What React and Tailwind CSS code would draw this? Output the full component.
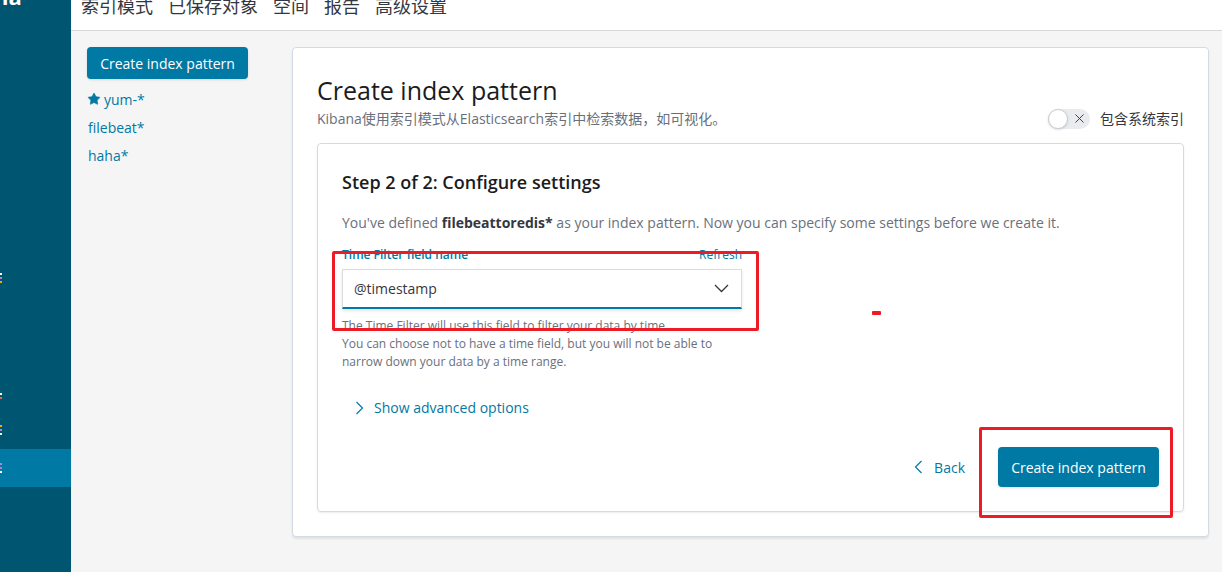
import { Star, X } from "lucide-react";

const tabs = ["索引模式", "已保存对象", "空间", "报告", "高级设置"];
const patterns = ["filebeat*", "haha*"];

const Bits = ({ colors }) => (
  <div className="flex flex-col gap-[2px]">
    {colors.map((c, i) => (
      <div key={i} className={`w-[2px] h-[2px] ${c}`} />
    ))}
  </div>
);

// chevrones finos como los de EUI
const Chevron = ({ dir = "right", className = "" }) => {
  const pts = {
    right: "1.5,1 7.5,7 1.5,13",
    left: "7.5,1 1.5,7 7.5,13",
  };
  if (dir === "down") {
    return (
      <svg width="15" height="9" viewBox="0 0 15 9" className={className}>
        <polyline points="1,1 7.5,7.5 14,1" fill="none" stroke="currentColor" strokeWidth="1.3" />
      </svg>
    );
  }
  return (
    <svg width="9" height="14" viewBox="0 0 9 14" className={className}>
      <polyline points={pts[dir]} fill="none" stroke="currentColor" strokeWidth="1.2" />
    </svg>
  );
};

const Sidebar = () => (
  <aside className="w-[71px] shrink-0 bg-[#005571] flex flex-col overflow-hidden">
    {/* logo cortado arriba */}
    <div className="-mt-[15px] -ml-[6px] text-[22px] leading-[22px] font-bold text-white">na</div>
    <div className="h-[266px]" />
    <Bits colors={["bg-white", "bg-[#a987d1]", "bg-[#f5a700]"]} />
    <div className="h-[110px]" />
    <Bits colors={["bg-white", "bg-[#e7664c]"]} />
    <div className="h-[26px]" />
    <Bits colors={["bg-[#f5a700]", "bg-[#a987d1]", "bg-white"]} />
    <div className="h-[14px]" />
    <div className="h-[38px] bg-[#0079a5] flex items-center">
      <Bits colors={["bg-[#a987d1]", "bg-[#a987d1]", "bg-white"]} />
    </div>
  </aside>
);

const Toggle = () => (
  <div className="w-[42px] h-[20px] rounded-full bg-[#e9ebee] flex items-center">
    <div className="w-[20px] h-[20px] rounded-full bg-white border border-[#c9cdd3] shadow-sm" />
    <X size={15} strokeWidth={1.5} className="ml-[4px] text-[#343741]" />
  </div>
);

export default function App() {
  return (
    <div className="relative flex h-[572px] w-[1222px] overflow-hidden font-['Open_Sans','Noto_Sans_CJK_SC',sans-serif]">
      <Sidebar />

      <div className="flex-1 flex flex-col bg-[#f5f5f5]">
        {/* Pestañas de gestión */}
        <header className="h-[31px] shrink-0 bg-white border-b border-[#d9d9d9] flex items-start gap-[15px] pl-[10px] text-[18px] text-[#343741]">
          {tabs.map((t) => (
            <span key={t} className="-mt-[3px] leading-[18px]">{t}</span>
          ))}
        </header>

        <main className="flex items-start pt-[16px] pl-[16px] pr-[13px]">
          {/* Lista de patrones */}
          <div className="w-[161px] shrink-0">
            <button className="w-[161px] h-[32px] rounded-[4px] bg-[#0079a5] text-white text-[14px] shadow-sm">
              Create index pattern
            </button>
            <div className="mt-[6px] flex flex-col text-[14px] text-[#0079a5]">
              <div className="h-[28px] flex items-center gap-[3px]">
                <Star size={14} fill="currentColor" strokeWidth={1} />
                <span>yum-*</span>
              </div>
              {patterns.map((p) => (
                <div key={p} className="h-[28px] flex items-center pl-[1px]">{p}</div>
              ))}
            </div>
          </div>

          {/* Panel principal */}
          <section className="ml-[44px] flex-1 bg-white border border-[#d3dae6] rounded-[4px] shadow-[0_2px_2px_rgba(0,0,0,0.08)] p-6">
            <div className="flex items-end justify-between">
              <div>
                <h1 className="text-[25px] leading-[36px] text-[#1a1c21]">Create index pattern</h1>
                <p className="text-[14px] leading-[20px] text-[#69707d] mt-[1px]">
                  Kibana使用索引模式从Elasticsearch索引中检索数据，如可视化。
                </p>
              </div>
              <div className="flex items-center gap-[10px]">
                <Toggle />
                <span className="text-[14px] text-[#343741]">包含系统索引</span>
              </div>
            </div>

            <div className="mt-[14px] h-[369px] border border-[#d3dae6] rounded-[4px] shadow-[0_1px_2px_rgba(0,0,0,0.08)] px-6 pt-[26px] pb-[24px] flex flex-col">
              <h2 className="text-[18px] leading-[24px] font-semibold text-[#1a1c21]">
                Step 2 of 2: Configure settings
              </h2>
              <p className="mt-[18px] text-[14px] leading-[22px] text-[#69707d]">
                You've defined <b className="font-bold text-[#343741]">filebeattoredis*</b> as your index pattern. Now you can specify some settings before we create it.
              </p>

              <div className="mt-[12px] w-[400px]">
                <div className="flex justify-between text-[12px] leading-[18px] text-[#0079a5]">
                  <span className="font-semibold">Time Filter field name</span>
                  <span>Refresh</span>
                </div>
                <div className="mt-[5px] h-[40px] bg-white border border-[#dcdcdc] border-b-2 border-b-[#0079a5] shadow-[0_2px_3px_rgba(0,0,0,0.1)] flex items-center justify-between pl-[11px] pr-[12px] text-[14px] text-[#343741]">
                  <span>@timestamp</span>
                  <Chevron dir="down" />
                </div>
                <p className="mt-[8px] text-[12px] leading-[18px] text-[#69707d]">
                  The Time Filter will use this field to filter your data by time.
                  <br />
                  You can choose not to have a time field, but you will not be able to narrow down your data by a time range.
                </p>
              </div>

              <div className="mt-[26px] ml-[13px] flex items-center gap-[10px] text-[14px] text-[#0079a5]">
                <Chevron dir="right" />
                <span>Show advanced options</span>
              </div>

              <div className="mt-auto flex items-center justify-end gap-[33px]">
                <div className="flex items-center gap-[11px] text-[14px] text-[#0079a5]">
                  <Chevron dir="left" />
                  <span>Back</span>
                </div>
                <button className="w-[161px] h-[40px] rounded-[4px] bg-[#0079a5] text-white text-[14px] font-medium shadow-sm">
                  Create index pattern
                </button>
              </div>
            </div>
          </section>
        </main>
      </div>

      {/* Marcas rojas de la captura */}
      <div className="absolute left-[332px] top-[251px] w-[427px] h-[80px] border-[3px] border-[#ed1c24] rounded-[2px] pointer-events-none" />
      <div className="absolute left-[979px] top-[427px] w-[194px] h-[91px] border-[3px] border-[#ed1c24] rounded-[2px] pointer-events-none" />
      <div className="absolute left-[872px] top-[311px] w-[9px] h-[4px] bg-[#ed1c24] rounded-[1px]" />
    </div>
  );
}
